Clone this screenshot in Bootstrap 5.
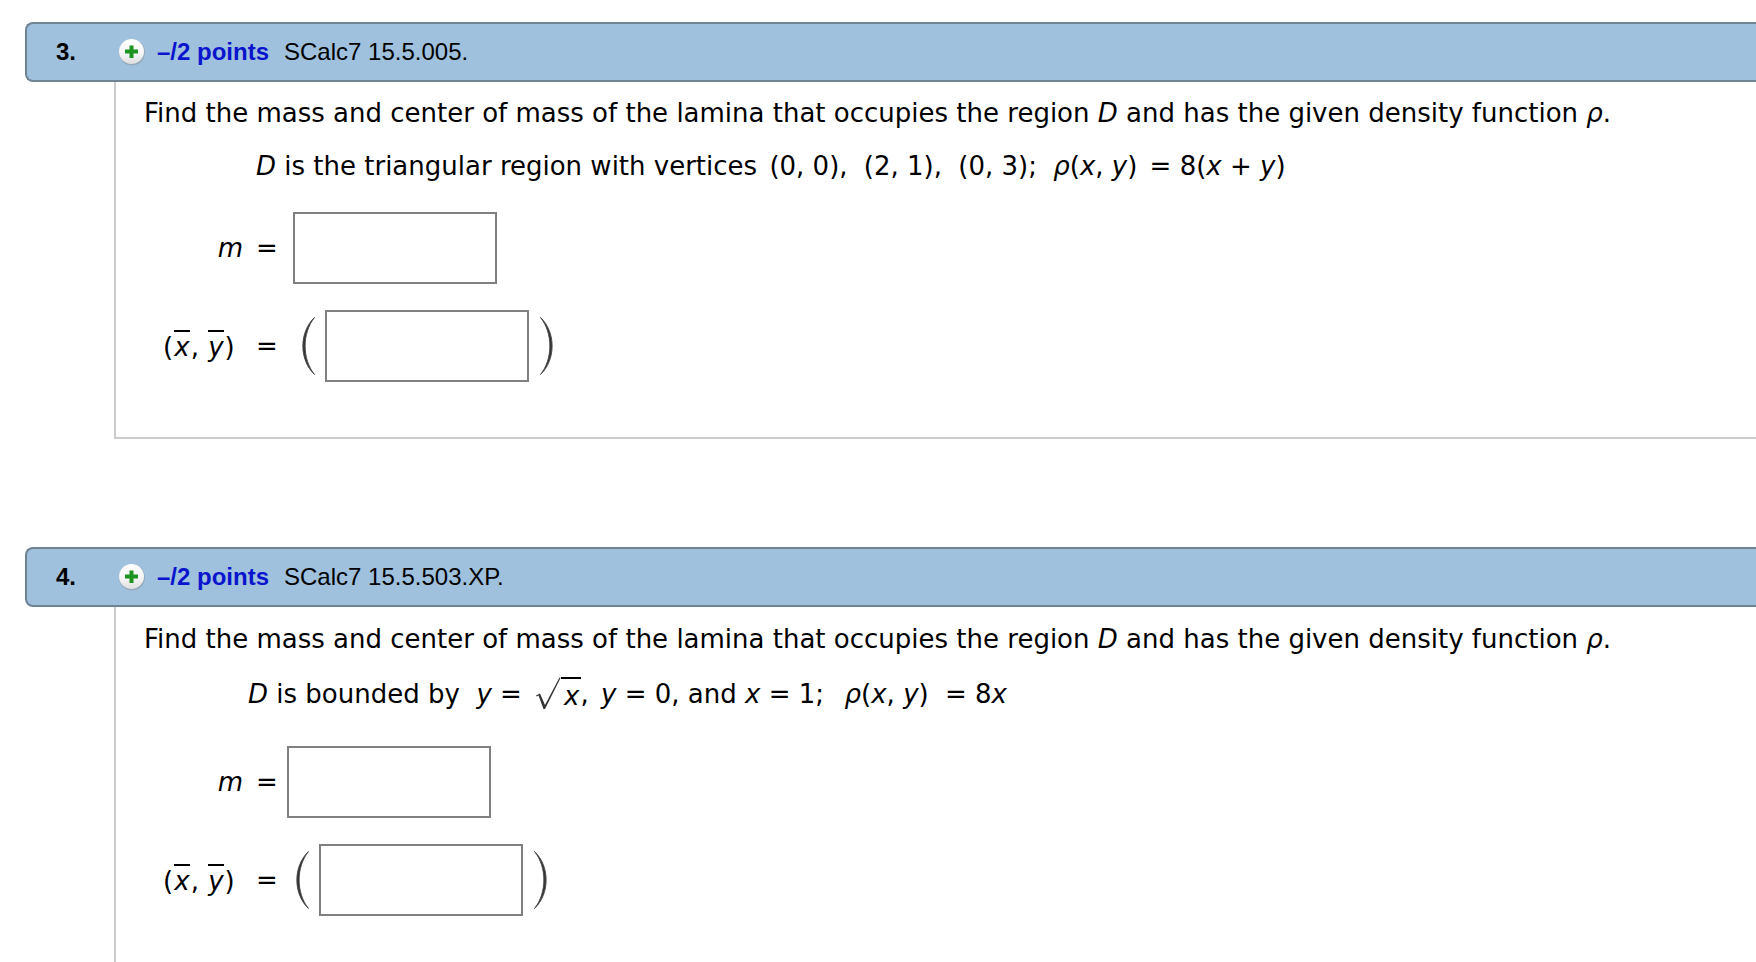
<!DOCTYPE html>
<html lang="en">
<head>
<meta charset="utf-8">
<meta name="viewport" content="width=device-width, initial-scale=1">
<title>Homework: center of mass</title>
<link href="https://cdn.jsdelivr.net/npm/bootstrap@5.3.0/dist/css/bootstrap.min.css" rel="stylesheet">
<style>
  body { color: #000; background: #fff; font-family: "DejaVu Sans", Verdana, sans-serif; font-size: 26px; line-height: 30px; }
  .page { padding: 22px 0 0 25px; }
  .q-head { height: 60px; background: #9fc1dd; border: 2px solid #6f8394; border-right: 0; border-radius: 8px 0 0 8px;
            font-family: "Liberation Sans", Arial, sans-serif; font-size: 24px; line-height: 28px; }
  .q-num { width: 91px; padding-left: 29px; }
  .q-add { width: 28px; height: 28px; }
  .q-points { color: #0a14cd; margin: 0 15px 0 11px; }
  .q-body { margin-left: 89px; padding: 16px 16px 55px 28px; border-left: 2px solid #ccc; border-bottom: 2px solid #ccc; }
  .q-last .q-body { padding-top: 17px; padding-bottom: 0; border-bottom: 0; }
  .q-gap { margin-bottom: 108px; }
  .stmt { margin: 23px 0 31px 112px; }
  .q-last .stmt { margin: 23px 0 33px 104px; }
  .term { margin: 0 4px; }
  .answers { row-gap: 26px; }
  .lbl { width: 99px; text-align: right; white-space: nowrap; }
  .eq { width: 22px; margin: 0 15px 0 13px; }
  .q-last .eq { margin-right: 9px; }
  .ans { width: 204px; height: 72px; border: 2px solid #808080; border-radius: 0; background: #fff; padding: 0 12px; font-size: 26px; }
  .paren { width: 32px; height: 58px; }
  .bar { display: inline-block; margin: 0 1px; border-top: 2px solid #000; line-height: 30px; }
  .root { display: inline-block; vertical-align: -2px; white-space: nowrap; }
  .root svg { width: 27px; height: 32px; vertical-align: top; }
  .radicand { display: inline-block; border-top: 2px solid #000; line-height: 34px; padding: 0 1px 0 3px; }
</style>
</head>
<body>
<main class="page d-flex flex-column min-vh-100">

  <section class="q-gap">
    <header class="q-head d-flex align-items-center">
      <span class="q-num fw-bold">3.</span>
      <button type="button" class="q-add btn p-0 border-0 d-flex" aria-label="Show details for question 3">
        <svg viewBox="0 0 28 28" width="28" height="28" aria-hidden="true">
          <defs><linearGradient id="disc" x1="0" y1="0" x2="0" y2="1"><stop offset="0" stop-color="#fff"/><stop offset=".6" stop-color="#f4f4f4"/><stop offset="1" stop-color="#dedede"/></linearGradient></defs>
          <circle cx="14" cy="14.5" r="13" fill="#8d9aa6" opacity=".6"/>
          <circle cx="13.500" cy="13.500" r="12.500" fill="url(#disc)"/>
          <path d="M11.500 7.500h4v4h4.500v4h-4.500v4.500h-4v-4.500h-4.500v-4h4.500z" fill="#1c9420"/>
        </svg>
      </button>
      <a href="#" class="q-points fw-bold text-decoration-none">–/2 points</a>
      <span>SCalc7 15.5.005.</span>
    </header>
    <div class="q-body">
      <p class="m-0">Find the mass and center of mass of the lamina that occupies the region <i>D</i> and has the given density function <i>ρ</i>.</p>
      <p class="stmt"><i>D</i> is the triangular region with vertices <span class="term">(0, 0),</span> <span class="term">(2, 1),</span> <span class="term">(0, 3);</span> <span class="term"><i>ρ</i>(<i>x</i>, <i>y</i>)</span> = 8(<i>x</i> + <i>y</i>)</p>
      <div class="answers d-flex flex-column">
        <div class="d-flex align-items-center">
          <label class="lbl" for="m3"><i>m</i></label><span class="eq">=</span>
          <input class="ans" id="m3" type="text">
        </div>
        <div class="d-flex align-items-center">
          <label class="lbl" for="c3">(<i class="bar">x</i>, <i class="bar">y</i>)&nbsp;</label><span class="eq">=</span>
          <svg class="paren" viewBox="0 0 32 58" aria-hidden="true"><path d="M21.500 .5C6 15 6 43 21.500 57.500C9 42 9 16 21.500 .5z" fill="#333" stroke="#444" stroke-width=".9"/></svg>
          <input class="ans" id="c3" type="text">
          <svg class="paren" viewBox="0 0 32 58" aria-hidden="true"><path d="M11.500 .5C27 15 27 43 11.500 57.500C24 42 24 16 11.500 .5z" fill="#333" stroke="#444" stroke-width=".9"/></svg>
        </div>
      </div>
    </div>
  </section>

  <section class="q-last flex-grow-1 d-flex flex-column">
    <header class="q-head d-flex align-items-center">
      <span class="q-num fw-bold">4.</span>
      <button type="button" class="q-add btn p-0 border-0 d-flex" aria-label="Show details for question 4">
        <svg viewBox="0 0 28 28" width="28" height="28" aria-hidden="true">
          <circle cx="14" cy="14.5" r="13" fill="#8d9aa6" opacity=".6"/>
          <circle cx="13.500" cy="13.500" r="12.500" fill="url(#disc)"/>
          <path d="M11.500 7.500h4v4h4.500v4h-4.500v4.500h-4v-4.500h-4.500v-4h4.500z" fill="#1c9420"/>
        </svg>
      </button>
      <a href="#" class="q-points fw-bold text-decoration-none">–/2 points</a>
      <span>SCalc7 15.5.503.XP.</span>
    </header>
    <div class="q-body flex-grow-1">
      <p class="m-0">Find the mass and center of mass of the lamina that occupies the region <i>D</i> and has the given density function <i>ρ</i>.</p>
      <p class="stmt"><i>D</i> is bounded by&nbsp; <i>y</i> = <span class="term"><span class="root"><svg viewBox="0 0 27 32" aria-hidden="true"><path d="M2 18.500L6 16.500L11 28L25.500 .5L26.500 1L11 32H9.500L4.500 18.500L2.500 19.500z" fill="#333"/></svg><i class="radicand">x</i></span>,</span> <i>y</i> = 0, and <i>x</i> = 1;&nbsp; <span class="term"><i>ρ</i>(<i>x</i>, <i>y</i>)</span> <span class="term">= 8<i>x</i></span></p>
      <div class="answers d-flex flex-column">
        <div class="d-flex align-items-center">
          <label class="lbl" for="m4"><i>m</i></label><span class="eq">=</span>
          <input class="ans" id="m4" type="text">
        </div>
        <div class="d-flex align-items-center">
          <label class="lbl" for="c4">(<i class="bar">x</i>, <i class="bar">y</i>)&nbsp;</label><span class="eq">=</span>
          <svg class="paren" viewBox="0 0 32 58" aria-hidden="true"><path d="M21.500 .5C6 15 6 43 21.500 57.500C9 42 9 16 21.500 .5z" fill="#333" stroke="#444" stroke-width=".9"/></svg>
          <input class="ans" id="c4" type="text">
          <svg class="paren" viewBox="0 0 32 58" aria-hidden="true"><path d="M11.500 .5C27 15 27 43 11.500 57.500C24 42 24 16 11.500 .5z" fill="#333" stroke="#444" stroke-width=".9"/></svg>
        </div>
      </div>
    </div>
  </section>

</main>
<script src="https://cdn.jsdelivr.net/npm/bootstrap@5.3.0/dist/js/bootstrap.bundle.min.js"></script>
</body>
</html>
